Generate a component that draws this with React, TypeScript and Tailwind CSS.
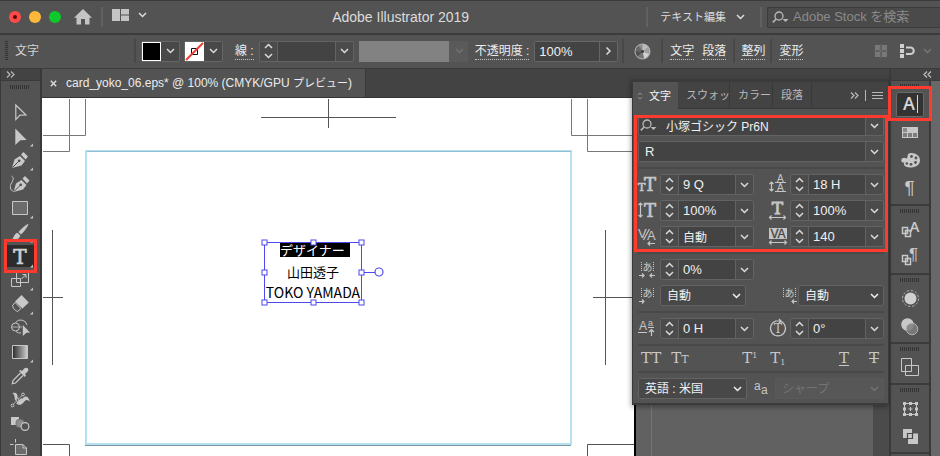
import { ReactNode, useState } from "react";

const SERIF = "DejaVu Serif";
const SANS = "Liberation Sans";
const JP = "Noto Sans CJK JP";

function Chevron({ className = "" }: { className?: string }) {
  return (
    <svg width="9" height="6" viewBox="0 0 9 6" className={className} aria-hidden="true">
      <path d="M1 1 L4.5 4.5 L8 1" fill="none" stroke="currentColor" strokeWidth="1.5" />
    </svg>
  );
}

function DoubleChevron({ left = false }: { left?: boolean }) {
  return (
    <svg width="9" height="7" viewBox="0 0 9 7" aria-hidden="true">
      <path
        d={left ? "M4 .5 L1 3.5 L4 6.5 M8 .5 L5 3.5 L8 6.5" : "M1 .5 L4 3.5 L1 6.5 M5 .5 L8 3.5 L5 6.5"}
        fill="none"
        stroke="currentColor"
        strokeWidth="1.2"
      />
    </svg>
  );
}

function SearchMark() {
  return (
    <svg width="17" height="13" viewBox="0 0 17 13" className="shrink-0" aria-hidden="true">
      <circle cx="7" cy="5" r="4" fill="none" stroke="#b8b8b8" strokeWidth="1.3" />
      <path d="M4.2 8 L.8 11.4" stroke="#b8b8b8" strokeWidth="1.6" />
      <path d="M10.5 8 H16.5 L13.5 11 Z" fill="#b8b8b8" />
    </svg>
  );
}

function Grip({ vertical = false }: { vertical?: boolean }) {
  if (vertical) {
    return (
      <svg width="3" height="20" viewBox="0 0 3 20" aria-hidden="true">
        <path d="M1.5 0 V20" stroke="#333" strokeWidth="3" strokeDasharray="1 1" />
      </svg>
    );
  }
  return (
    <svg width="20" height="4" viewBox="0 0 20 4" aria-hidden="true">
      <path d="M0 2 H20" stroke="#333" strokeWidth="4" strokeDasharray="1 1" />
    </svg>
  );
}

function Separator() {
  return <span className="w-[2px] h-6 bg-[#484848] shrink-0" />;
}

function Stepper({ name }: { name: string }) {
  return (
    <span className="flex flex-col w-[18px] h-full shrink-0 border-r border-[#636363] text-[#dadada]">
      <button aria-label={name + "を上げる"} className="flex-1 flex items-center justify-center">
        <Chevron className="rotate-180" />
      </button>
      <button aria-label={name + "を下げる"} className="flex-1 flex items-center justify-center">
        <Chevron />
      </button>
    </span>
  );
}

type ComboProps = {
  name: string;
  initial: string;
  stepper?: boolean;
  icon?: ReactNode;
  className?: string;
  text?: string;
};

function Combo({ name, initial, stepper = true, icon, className = "", text = "text-[13px] pl-1" }: ComboProps) {
  const [value, setValue] = useState(initial);

  return (
    <span className={`flex h-[21px] min-w-0 rounded-[2px] border border-[#636363] bg-[#4b4b4b] ${className}`}>
      {stepper && <Stepper name={name} />}
      <span className="flex flex-1 min-w-0 items-center bg-[#434343]">
        {icon}
        <input
          aria-label={name}
          value={value}
          onChange={(e) => setValue(e.target.value)}
          className={`w-full min-w-0 h-full bg-transparent leading-[19px] text-[#f0f0f0] outline-none ${text}`}
        />
      </span>
      <button
        aria-label={name + "の候補"}
        className="w-[18px] shrink-0 flex items-center justify-center border-l border-[#636363] text-[#dadada]"
      >
        <Chevron />
      </button>
    </span>
  );
}

type PickProps = { name: string; value: string; disabled?: boolean; className?: string };

function Pick({ name, value, disabled, className = "" }: PickProps) {
  return (
    <span className={`relative h-[21px] ${disabled ? "text-[#747474]" : "text-[#f0f0f0]"} ${className}`}>
      <select
        aria-label={name}
        disabled={disabled}
        className={`block w-full h-full appearance-none rounded-[2px] border pl-[6px] pt-px text-[12px] leading-[18px] opacity-100 outline-none ${
          disabled ? "border-[#595959] bg-[#575757]" : "border-[#636363] bg-[#484848]"
        }`}
      >
        <option>{value}</option>
      </select>
      <Chevron className="absolute right-[5px] top-2 pointer-events-none" />
    </span>
  );
}

function TitleBar() {
  return (
    <header className="flex items-center h-[35px] shrink-0 border-t border-b-2 border-[#3b3b3b] text-[#dcdcdc]">
      <div className="flex gap-2 pl-[9px]">
        <button aria-label="閉じる" className="size-3 rounded-full bg-[#fc4b48] flex items-center justify-center">
          <span className="size-1 rounded-full bg-[#5a0505]" />
        </button>
        <button aria-label="しまう" className="size-3 rounded-full bg-[#fdb83b]" />
        <button aria-label="拡大" className="size-3 rounded-full bg-[#0fc92c]" />
      </div>
      <button aria-label="ホーム" className="ml-[13px]">
        <svg width="18" height="16" viewBox="0 0 18 16">
          <path d="M9 0 L18 8.8 H15.5 V15.5 H11 V10 H7 V15.5 H2.5 V8.8 H0 Z" fill="#c4c4c4" />
        </svg>
      </button>
      <span className="w-[2px] h-5 mx-[9px] bg-[#616161]" />
      <button aria-label="ドキュメントのレイアウト" className="flex items-center gap-[9px] pb-1">
        <svg width="17" height="12" viewBox="0 0 17 12">
          <path d="M0 0 H8 V12 H0 Z M9 0 H17 V5.5 H9 Z M9 6.5 H17 V12 H9 Z" fill="#c4c4c4" />
        </svg>
        <Chevron />
      </button>
      <h1 className="flex-1 pl-2 text-center text-[14px]">Adobe Illustrator 2019</h1>
      <span className="w-[2px] h-5 mr-3 bg-[#616161]" />
      <button className="flex items-center gap-[10px] text-[11px]">
        テキスト編集
        <Chevron />
      </button>
      <span className="w-[2px] h-5 ml-[15px] mr-[5px] bg-[#616161]" />
      <label className="flex items-center gap-1 w-[173px] h-[21px] pl-1 border border-r-0 border-[#3b3b3b] bg-[#4a4a4a] rounded-l-[2px]">
        <SearchMark />
        <input
          aria-label="Adobe Stock を検索"
          placeholder="Adobe Stock を検索"
          className="w-full min-w-0 bg-transparent text-[13px] leading-4 placeholder:text-[#8a8a8a] outline-none"
        />
      </label>
    </header>
  );
}

function PanelLink({ children }: { children: ReactNode }) {
  return (
    <button className="pt-px text-[12px] leading-4 text-[#ececec] border-b border-dotted border-[#c4c4c4]">
      {children}
    </button>
  );
}

function ControlBar() {
  return (
    <div className="flex items-center h-[34px] shrink-0 border-b border-[#3b3b3b] pb-px">
      <span className="pl-[5px] pr-[7px]">
        <Grip vertical />
      </span>
      <span className="w-[119px] text-[12px] text-[#d2d2d2]">文字</span>
      <Separator />
      <div className="flex items-center gap-1 pl-[5px] pr-3 text-[#dadada]">
        <button aria-label="塗り" className="flex h-[21px] border border-[#666] rounded-[2px]">
          <span className="w-[19px] h-[19px] bg-black border border-white" />
          <span className="w-[18px] h-full flex items-center justify-center bg-[#484848]">
            <Chevron />
          </span>
        </button>
        <button aria-label="線の色" className="flex h-[21px] border border-[#666] rounded-[2px]">
          <svg width="19" height="19" viewBox="0 0 19 19">
            <path d="M0 0 H19 V19 H0 Z" fill="#fff" />
            <path d="M6.5 6.5 H12.5 V12.5 H6.5 Z" fill="none" stroke="#111" />
            <path d="M1 18 L18 1" stroke="#ee3b33" strokeWidth="2" />
          </svg>
          <span className="w-[18px] h-full flex items-center justify-center bg-[#484848]">
            <Chevron />
          </span>
        </button>
      </div>
      <PanelLink>線 :</PanelLink>
      <Combo name="線幅" initial="" className="w-[95px] ml-[5px]" />
      <button
        aria-label="線の種類"
        disabled
        className="flex ml-[5px] w-[109px] h-[21px] items-center justify-end pr-1 bg-[linear-gradient(to_right,#828282_90px,#5a5a5a_90px)] text-[#727272]"
      >
        <Chevron />
      </button>
      <span className="w-[7px]" />
      <PanelLink>不透明度 :</PanelLink>
      <span className="flex ml-[5px] w-[84px] h-[21px] border border-[#666] rounded-[2px]">
        <input
          aria-label="不透明度"
          defaultValue="100%"
          className="w-full min-w-0 pl-1 bg-[#434343] text-[13px] leading-[19px] text-[#f0f0f0] outline-none"
        />
        <button
          aria-label="不透明度を調整"
          className="w-[18px] shrink-0 flex items-center justify-center border-l border-[#666] bg-[#484848] text-[#dadada]"
        >
          <Chevron className="-rotate-90" />
        </button>
      </span>
      <span className="w-1" />
      <Separator />
      <button aria-label="オブジェクトを再配色" className="mx-[10px]">
        <svg width="17" height="17" viewBox="0 0 17 17">
          <circle cx="8.5" cy="8.5" r="7.5" fill="#8b8b8b" />
          <path d="M8.5 8.5 L8.5 1 A7.5 7.5 0 0 1 14.600 4 Z" fill="#bdbdbd" />
          <path d="M8.5 8.5 L14.600 4 A7.5 7.5 0 0 1 15.500 11 Z" fill="#a0a0a0" />
          <path d="M8.5 8.5 L15.500 11 A7.5 7.5 0 0 1 10 15.900 Z" fill="#cfcfcf" />
          <path d="M8.5 8.5 L10 15.900 A7.5 7.5 0 0 1 3.300 14 Z" fill="#757575" />
          <path d="M8.5 8.5 L3.300 14 A7.5 7.5 0 0 1 1 8 Z" fill="#505050" />
          <path d="M8.5 8.5 L1 8 A7.5 7.5 0 0 1 4.500 2.200 Z" fill="#686868" />
          <circle cx="8.5" cy="8.5" r="7.500" fill="none" stroke="#b5b5b5" />
          <circle cx="8.5" cy="8.5" r="1.5" fill="#3c3c3c" />
        </svg>
      </button>
      <Separator />
      <div className="flex gap-2 px-[7px]">
        <PanelLink>文字</PanelLink>
        <PanelLink>段落</PanelLink>
      </div>
      <Separator />
      <span className="w-[6px]" />
      <PanelLink>整列</PanelLink>
      <span className="w-[5px]" />
      <Separator />
      <span className="w-[7px]" />
      <PanelLink>変形</PanelLink>
      <div className="flex items-center ml-auto pr-2 gap-2">
        <button aria-label="ピクセルに整合" className="mr-1">
          <svg width="14" height="14" viewBox="0 0 14 14">
            <path d="M1 1 H6 V6 H1 Z M8 1 H13 V6 H8 Z M1 8 H6 V13 H1 Z M8 8 H13 V13 H8 Z" fill="#787878" />
            <path d="M7 0 V14 M0 7 H14" stroke="#787878" strokeWidth=".8" />
          </svg>
        </button>
        <button aria-label="スナップ" className="flex items-center gap-2 text-[#777]">
          <svg width="15" height="14" viewBox="0 0 15 14">
            <path d="M0 0 H4 V4 H0 Z M0 5 H4 V9 H0 Z M0 10 H4 V14 H0 Z" fill="#d0d0d0" />
            <path d="M6 3.5 H10.5 A3.2 3.2 0 0 1 10.5 10 H6" fill="none" stroke="#d0d0d0" strokeWidth="2" />
          </svg>
          <Chevron />
        </button>
      </div>
    </div>
  );
}

const nib = (
  <>
    <path d="M4 20 L6.5 11.5 L12 8 L17 13 L13.5 17.5 Z M13 6.5 L15.5 4 L20 8.5 L17.5 11.5 Z" fill="#c8c8c8" />
    <path d="M4.5 19.5 L11 13" stroke="#4c4c4c" />
    <circle cx="11.2" cy="12.8" r="1.3" fill="#4c4c4c" />
  </>
);

const tools: { name: string; corner?: boolean; art: ReactNode }[] = [
  {
    name: "選択",
    art: <path d="M7.8 5 L18 15 L12 15.2 L7.8 19.5 Z" fill="none" stroke="#c8c8c8" strokeWidth="1.2" />,
  },
  { name: "ダイレクト選択", corner: true, art: <path d="M7.3 4.5 L18.7 16 L12.3 16.2 L7.3 21 Z" fill="#c8c8c8" /> },
  { name: "ペン", corner: true, art: nib },
  {
    name: "曲線",
    art: (
      <>
        <g transform="translate(1.5 0)">{nib}</g>
        <path d="M3.5 4 C6.5 6 5 8.5 3.5 11 C1.5 14 2 18.5 5.5 19.3" fill="none" stroke="#c8c8c8" />
      </>
    ),
  },
  {
    name: "長方形",
    corner: true,
    art: <path d="M4.5 5.5 H19.5 V18.5 H4.5 Z" fill="#6c6c6c" stroke="#c8c8c8" />,
  },
  {
    name: "ブラシ",
    corner: true,
    art: (
      <path
        d="M20.5 3.8 C18 4.5 12.5 9.5 10.5 12 L13 14.5 C15.5 12.5 19.8 7 20.5 3.8 Z M9.5 12.8 L12.2 15.5 C12 18.5 8 20.5 3.5 20 C6 18.5 5.5 14 9.5 12.8 Z"
        fill="#c8c8c8"
      />
    ),
  },
  {
    name: "文字ツール",
    corner: true,
    art: (
      <text
        x="12"
        y="19"
        textAnchor="middle"
        fontFamily={SERIF}
        fontSize="20"
        fill="#d0d0d0"
        stroke="#d0d0d0"
        strokeWidth=".7"
      >
        T
      </text>
    ),
  },
  {
    name: "拡大・縮小",
    corner: true,
    art: (
      <>
        <path d="M3.5 10.5 H12.5 V18.5 H3.5 Z M8.5 4.5 H20.5 V14.5 H8.5 Z" fill="none" stroke="#c8c8c8" />
        <path d="M13.5 11 L17.5 7 M14.5 6.5 H18 V10" fill="none" stroke="#c8c8c8" />
      </>
    ),
  },
  {
    name: "消しゴム",
    corner: true,
    art: (
      <>
        <path d="M13.5 3 L20.8 10.5 L14.5 16.5 L7 9.5 Z" fill="#c8c8c8" />
        <path d="M7 10.5 L4.5 13.5 C5 16.5 7 18.5 9.5 19.5 L13 16.5 Z" fill="none" stroke="#c8c8c8" />
      </>
    ),
  },
  {
    name: "シェイプ形成",
    art: (
      <>
        <circle cx="7.5" cy="11" r="4" fill="none" stroke="#c8c8c8" />
        <path d="M7.5 6.5 A6.5 6.5 0 0 1 19 9 M8 15.5 A6 6 0 0 0 13 17" fill="none" stroke="#c8c8c8" />
        <path d="M4.5 11 H14" stroke="#c8c8c8" strokeWidth="1.5" strokeDasharray="1 1" />
        <path d="M14.8 9 L22 16.5 L18.5 16.8 L14.8 20 Z" fill="#c8c8c8" />
      </>
    ),
  },
  {
    name: "グラデーション",
    corner: true,
    art: (
      <>
        <defs>
          <linearGradient id="ramp">
            <stop offset="0" stopColor="#2a2a2a" />
            <stop offset="1" stopColor="#d0d0d0" />
          </linearGradient>
        </defs>
        <path d="M4.5 5.5 H19.5 V18.5 H4.5 Z" fill="url(#ramp)" stroke="#c8c8c8" />
      </>
    ),
  },
  {
    name: "スポイト",
    art: (
      <>
        <path d="M12.5 9 L5 16.5 L4.3 19.7 L7.5 19 L15 11.5" fill="none" stroke="#c8c8c8" strokeWidth="1.2" />
        <path
          d="M11 7 L12.5 6 L14 7 L16.5 4.3 Q18.5 3 20 4.5 Q21 6 19.7 7.5 L17 10 L18 11.5 L16.8 13 Z"
          fill="#c8c8c8"
        />
      </>
    ),
  },
  {
    name: "パペットワープ",
    art: (
      <>
        <path
          d="M4.5 5 C8 4 10 6 9.500 9.5 L12.500 8 L14 11 C17 6.5 21 8 21.8 14 C19 10.5 17.500 12 15.5 14.5 C13 18 9.5 17 8 15 C6 13 8 8 4.500 5 Z"
          fill="#c8c8c8"
        />
        <path d="M5 16.5 L15 6.5" stroke="#535353" strokeWidth="2.500" />
        <path d="M5 16.5 L15 6.5" stroke="#c8c8c8" strokeWidth=".8" />
        <circle cx="4.5" cy="17.5" r="1.4" fill="#535353" stroke="#c8c8c8" />
        <circle cx="9.5" cy="12" r="1.4" fill="#535353" stroke="#c8c8c8" />
        <circle cx="15" cy="6.5" r="1.4" fill="#535353" stroke="#c8c8c8" />
      </>
    ),
  },
  {
    name: "ブレンド",
    art: (
      <>
        <path d="M3 5 H11 V13 H3 Z" fill="#c8c8c8" />
        <rect x="8" y="7.5" width="8" height="8" rx="3" fill="#8d8d8d" stroke="#6b6b6b" strokeWidth=".8" />
        <circle cx="17" cy="14.5" r="3.9" fill="#535353" stroke="#c8c8c8" strokeWidth="1.2" />
      </>
    ),
  },
  {
    name: "アートボード",
    art: (
      <path
        d="M7.5 3 V6.5 M2 8.5 H5.5 M7.5 8.5 H15 L18.5 12 V18.5 H7.5 Z M15 8.5 V12 H18.5"
        fill="#6c6c6c"
        stroke="#c8c8c8"
      />
    ),
  },
];

function Toolbar() {
  return (
    <nav className="flex flex-col w-[42px] shrink-0 border-l border-r-2 border-[#393939] bg-[#535353]">
      <div className="flex items-center h-3 shrink-0 pl-[5px] bg-[#434343] border-b border-[#3b3b3b] text-[#b8b8b8]">
        <DoubleChevron />
      </div>
      <div className="flex justify-center h-[19px] shrink-0 pt-1 pr-px">
        <Grip />
      </div>
      {tools.map((tool) => {
        const active = tool.name === "文字ツール";
        return (
          <button key={tool.name} aria-label={tool.name} className="relative h-6 shrink-0 flex justify-center">
            <span className={active ? "w-7 h-[22px] self-center bg-[#2c2c2c]" : "w-7 h-6"}>
              <svg width="28" height="24" viewBox="-1 0 28 24" className="overflow-visible">
                {tool.art}
                {tool.corner && <path d="M25 19.5 V22.5 H22 Z" fill="#c8c8c8" />}
              </svg>
            </span>
            {active && <span className="absolute inset-x-[3px] -inset-y-[5px] z-10 border-[3px] border-[#ff3b30]" />}
          </button>
        );
      })}
    </nav>
  );
}

function Artboard() {
  const handles = [
    [0, 0], [49, 0], [97, 0], [0, 30], [97, 30], [0, 60], [49, 60], [97, 60],
  ];

  return (
    <div className="relative w-[594px] shrink-0 h-full bg-white border-r-2 border-black overflow-hidden">
      <svg width="594" height="358" viewBox="0 0 594 358" fill="none" className="block">
        <path d="M27.5 1 V53.5 H1 M43.5 1 V37.5 H1 M529.5 1 V37.5 H594 M545.5 1 V53.5 H594" stroke="#777" />
        <path
          d="M286.5 1 V30 M219 19.5 H354 M10.5 132 V267 M1 199.5 H21 M563.5 132 V267 M551 199.5 H594"
          stroke="#555"
        />
        <path d="M1 346.5 H27.5 V358 M594 346.5 H545.5 V358" stroke="#555" />
        <path d="M44 53 H529 V346 H44 Z" stroke="#b4e0ef" strokeWidth="2" />
        <path d="M45 53.5 H529" stroke="#94bfd2" />
        <path d="M43 347.5 H529" stroke="#7f95a1" />
      </svg>
      <div className="absolute left-[222px] top-[145px] w-[98px] flex flex-col items-center text-black font-['Noto_Sans_CJK_JP',sans-serif]">
        <span className="self-start ml-4 w-[70px] h-[14px] bg-black text-white text-[13px] leading-[13px]">
          デザイナー
        </span>
        <span className="mt-[7px] text-[13px] leading-4">山田透子</span>
        <span className="mt-1 text-[14px] leading-4 whitespace-nowrap">TOKO YAMADA</span>
      </div>
      <svg width="124" height="70" viewBox="-4 -4 124 70" fill="none" className="absolute left-[218px] top-[140px]">
        <path d="M.5 .5 H97.5 V60.5 H.5 Z M97.5 30.5 H111" stroke="#4d49ee" />
        <circle cx="115" cy="30" r="4" stroke="#4d49ee" strokeWidth="1.2" />
        {handles.map(([x, y]) => (
          <rect key={x + "-" + y} x={x - 2} y={y - 2} width="5" height="5" fill="#fff" stroke="#4d49ee" />
        ))}
      </svg>
    </div>
  );
}

function Glyph({ label, w = 22, children }: { label: string; w?: number; children: ReactNode }) {
  return (
    <svg
      width={w}
      height="21"
      viewBox={`0 0 ${w} 21`}
      role="img"
      aria-label={label}
      fill="none"
      stroke="none"
      className="shrink-0 overflow-visible"
    >
      {children}
    </svg>
  );
}

const line = { stroke: "#c6c6c6", strokeWidth: 1.2 };
const ink = "#c6c6c6";

function Field({ label, value, icon, text }: { label: string; value: string; icon: ReactNode; text?: string }) {
  return (
    <div className="flex w-[116px]">
      <Glyph label={label}>{icon}</Glyph>
      <Combo name={label} initial={value} text={text} className="flex-1" />
    </div>
  );
}

function Rule() {
  return <hr className="h-[2px] border-0 bg-[#494949]" />;
}

function AkiIcon({ arrows }: { arrows: "both" | "right" | "left" }) {
  return (
    <>
      <path d="M3.5 3 V13 M15.5 3 V13" stroke={ink} strokeDasharray="1 1" />
      <text x="9.5" y="12" textAnchor="middle" fontFamily={JP} fontSize="10" fill={ink}>
        あ
      </text>
      {arrows !== "left" && <path d="M1 16.5 H6 M4 14.5 L6 16.5 L4 18.5" {...line} />}
      {arrows !== "right" && <path d="M17 16.5 H12 M14 14.5 L12 16.5 L14 18.5" {...line} />}
    </>
  );
}

function CharacterPanel() {
  const tabs = [
    { name: "スウォッ", size: "w-[52px] pl-2" },
    { name: "カラー", size: "w-[43px] pl-2" },
    { name: "段落", size: "w-[39px] pl-2" },
  ];

  return (
    <section className="absolute right-0 top-[10px] w-[257px] z-10 border border-t-[3px] border-b-2 border-[#3a3a3a] bg-[#535353] shadow-[-1px_2px_5px_rgba(0,0,0,0.35)]">
      <div className="flex h-[27px] bg-[#434343] text-[11px] text-[#b9b9b9]">
        <button className="flex items-center gap-[6px] w-[45px] pl-1 pt-px bg-[#535353] text-[#f4f4f4] whitespace-nowrap">
          <svg width="6" height="8" viewBox="0 0 6 8" fill="none" stroke="#999" strokeWidth=".9" className="shrink-0">
            <path d="M1 3 L3 .8 L5 3 M1 5 L3 7.2 L5 5" />
          </svg>
          文字
        </button>
        {tabs.map((tab) => (
          <button
            key={tab.name}
            className={`whitespace-nowrap text-left pt-px border-r border-b border-[#393939] ${tab.size}`}
          >
            {tab.name}
          </button>
        ))}
        <div className="flex flex-1 items-center justify-end gap-[6px] pr-[5px] border-b border-[#393939]">
          <button aria-label="展開">
            <DoubleChevron />
          </button>
          <span className="w-px h-[11px] bg-[#b9b9b9]" />
          <button aria-label="パネルメニュー">
            <svg width="11" height="9" viewBox="0 0 11 9">
              <path d="M0 1.5 H11 M0 4.5 H11 M0 7.5 H11" stroke="#b9b9b9" />
            </svg>
          </button>
        </div>
      </div>

      <div className="flex flex-col gap-[5px] pl-[5px] pr-1 pt-[6px] pb-1">
        <div className="relative flex flex-col gap-[5px]">
          <Combo
            name="フォント"
            initial="小塚ゴシック Pr6N"
            stepper={false}
            text="text-[12px] pl-1"
            icon={
              <span className="pl-px pr-[5px]">
                <SearchMark />
              </span>
            }
          />
          <Combo name="スタイル" initial="R" stepper={false} text="text-[13px] pl-[6px]" />
          <Rule />
          <div className="flex justify-between">
            <Field
              label="フォントサイズ"
              value="9 Q"
              icon={
                <g fontFamily={SERIF} fill={ink} stroke={ink} strokeWidth=".7">
                  <text x="0" y="17" fontSize="11">T</text>
                  <text x="6" y="17" fontSize="18">T</text>
                </g>
              }
            />
            <Field
              label="行送り"
              value="18 H"
              icon={
                <>
                  <g fontFamily={SANS} fontSize="10" fill={ink}>
                    <text x="9" y="8">A</text>
                    <text x="9" y="17">A</text>
                  </g>
                  <path
                    d="M7 8.5 H18 M7 17.5 H18 M3.5 8 V17 M1.5 10 L3.5 8 L5.5 10 M1.5 15 L3.5 17 L5.5 15"
                    {...line}
                  />
                </>
              }
            />
          </div>
          <div className="flex justify-between">
            <Field
              label="垂直比率"
              value="100%"
              icon={
                <>
                  <text x="6" y="17" fontFamily={SERIF} fontSize="18" fill={ink} stroke={ink} strokeWidth=".7">T</text>
                  <path d="M2.5 3 V17 M.5 5 L2.5 3 L4.5 5 M.5 15 L2.5 17 L4.5 15" {...line} />
                </>
              }
            />
            <Field
              label="水平比率"
              value="100%"
              icon={
                <>
                  <text
                    x="9.5"
                    y="14"
                    textAnchor="middle"
                    fontFamily={SERIF}
                    fontSize="17"
                    fill={ink}
                    stroke={ink}
                    strokeWidth=".8"
                  >
                    T
                  </text>
                  <path d="M1.5 17.5 H17.5 M3.5 15.5 L1.5 17.5 L3.5 19.5 M15.5 15.5 L17.5 17.5 L15.5 19.5" {...line} />
                </>
              }
            />
          </div>
          <div className="flex justify-between">
            <Field
              label="カーニング"
              value="自動"
              text="text-[12px] pl-1"
              icon={
                <>
                  <g fontFamily={SANS} fontSize="13" fill={ink}>
                    <text x="0" y="12">V</text>
                    <text x="9" y="14">A</text>
                  </g>
                  <path d="M5.5 14 L11.5 3 M17 17.5 H10 M12 15.5 L10 17.5 L12 19.5" {...line} />
                </>
              }
            />
            <Field
              label="トラッキング"
              value="140"
              icon={
                <>
                  <path d="M1 2 H19 V13 H1 Z" fill={ink} />
                  <text
                    x="10"
                    y="12"
                    textAnchor="middle"
                    fontFamily={SANS}
                    fontSize="12"
                    fill="#444"
                    stroke="#444"
                    strokeWidth=".3"
                  >
                    VA
                  </text>
                  <path
                    d="M1.5 16.5 H18.5 M3.5 14.5 L1.5 16.5 L3.5 18.5 M16.5 14.5 L18.5 16.5 L16.5 18.5"
                    {...line}
                  />
                </>
              }
            />
          </div>
          <span className="absolute -inset-x-1 top-0 -bottom-[5px] border-[3px] border-[#ff3b30] pointer-events-none" />
        </div>
        <Rule />
        <Field label="文字ツメ" value="0%" icon={<AkiIcon arrows="both" />} />
        <div className="flex">
          <Glyph label="左アキ">
            <AkiIcon arrows="right" />
          </Glyph>
          <Pick name="文字前のアキ" value="自動" className="w-[86px]" />
          <span className="flex-1" />
          <Glyph label="右アキ" w={18}>
            <AkiIcon arrows="left" />
          </Glyph>
          <Pick name="文字後のアキ" value="自動" className="w-[86px]" />
        </div>
        <Rule />
        <div className="flex justify-between">
          <Field
            label="ベースラインシフト"
            value="0 H"
            icon={
              <>
                <g fontFamily={SANS} fill={ink}>
                  <text x="1" y="12" fontSize="12">A</text>
                  <text x="10" y="8" fontSize="9">a</text>
                </g>
                <path d="M0 14.5 H9 M10 9.5 H16 M13.5 18 V11.5 M11 14 L13.5 11.5 L16 14" {...line} />
              </>
            }
          />
          <Field
            label="文字回転"
            value="0°"
            icon={
              <>
                <path d="M7.5 3.3 A7.5 7.5 0 1 0 12.5 3.3 M7 3 H13 M11 1 L13 3 L11 5" {...line} />
                <text x="10" y="15" textAnchor="middle" fontFamily={SERIF} fontSize="12" fill={ink}>T</text>
              </>
            }
          />
        </div>
        <Rule />
        <div className="flex h-[15px] items-center pl-[3px] pr-[5px] text-[15px] leading-[15px] text-[#c8c8c8] font-['DejaVu_Serif',serif]">
          <button aria-label="オールキャップス">TT</button>
          <button aria-label="スモールキャップス" className="ml-[10px]">
            T<span className="text-[11px]">T</span>
          </button>
          <span className="flex-1" />
          <button aria-label="上付き文字" className="flex">
            T<span className="text-[8px] leading-[9px]">1</span>
          </button>
          <button aria-label="下付き文字" className="flex ml-[13px]">
            T<span className="self-end text-[8px] leading-[6px]">1</span>
          </button>
          <span className="flex-1" />
          <button aria-label="下線" className="underline underline-offset-2">T</button>
          <button aria-label="打ち消し線" className="ml-5 line-through">T</button>
        </div>
        <Rule />
        <div className="flex justify-between">
          <Pick name="言語" value="英語 : 米国" className="w-[109px]" />
          <Glyph label="アンチエイリアス" w={16}>
            <g fontFamily={SANS} fontSize="12" fill={ink}>
              <text x="1" y="12">a</text>
              <text x="8" y="16">a</text>
            </g>
          </Glyph>
          <Pick name="アンチエイリアスの種類" value="シャープ" disabled className="w-[109px]" />
        </div>
      </div>
    </section>
  );
}

const stacked = (
  <path
    d="M6.5 11.5 H11.5 V17.5 H6.5 Z M9.5 14.5 H14.5 V20.5 H9.5 Z"
    fill="none"
    stroke="#c8c8c8"
    strokeWidth="1.5"
  />
);

const dockGroups: { name: string; art: ReactNode }[][] = [
  [
    {
      name: "文字パネル",
      art: (
        <>
          <rect x=".5" y="1.5" width="27" height="24" rx="2" fill="#333" stroke="#6a6a6a" />
          <text
            x="13"
            y="19"
            textAnchor="middle"
            fontFamily="Open Sans"
            fontSize="18"
            fontWeight="600"
            fill="#d8d8d8"
          >
            A
          </text>
          <path d="M21.5 4 V22" stroke="#d8d8d8" />
        </>
      ),
    },
    {
      name: "スウォッチパネル",
      art: (
        <>
          <path d="M6 8 H22 V19 H6 Z" fill="#c8c8c8" />
          <path d="M7 9 H11 V13 H7 Z" fill="#8b8b8b" />
          <path d="M7 14 H11 V18 H7 Z M12 14 H16 V18 H12 Z M17 14 H21 V18 H17 Z" fill="#7d7d7d" />
        </>
      ),
    },
    {
      name: "カラーパネル",
      art: (
        <>
          <path
            d="M13 6.5 C18 5 24 8 24 13.5 C24 18 19.5 20.5 14 20.5 C8 20.5 7 16.5 8.5 15.5 C5.5 16 4.5 13.5 6 11.5 C7 10.5 9 10.5 10.5 11.5 C12.5 10.5 10.5 8 13 6.5 Z"
            fill="#c8c8c8"
          />
          <g fill="#535353">
            <circle cx="15.5" cy="9.5" r="1.4" />
            <circle cx="20" cy="11" r="1.4" />
            <circle cx="19.5" cy="15.500" r="1.4" />
            <circle cx="15" cy="17.3" r="1.4" />
            <circle cx="10.8" cy="16.5" r="1.300" />
          </g>
        </>
      ),
    },
    {
      name: "段落パネル",
      art: (
        <text x="13.5" y="19" textAnchor="middle" fontFamily={SANS} fontSize="19" fill="#c8c8c8">¶</text>
      ),
    },
  ],
  [
    {
      name: "文字スタイル",
      art: (
        <>
          {stacked}
          <text
            x="18.5"
            y="16"
            textAnchor="middle"
            fontFamily="Open Sans"
            fontSize="15"
            fontWeight="600"
            fill="#c8c8c8"
          >
            A
          </text>
        </>
      ),
    },
    {
      name: "段落スタイル",
      art: (
        <>
          {stacked}
          <text x="17.5" y="16" textAnchor="middle" fontFamily={SANS} fontSize="17" fill="#c8c8c8">¶</text>
        </>
      ),
    },
  ],
  [
    {
      name: "アピアランス",
      art: (
        <>
          <circle cx="14.5" cy="13.5" r="6" fill="#d0d0d0" />
          <circle cx="14.5" cy="13.5" r="8" fill="none" stroke="#b0b0b0" strokeDasharray="2.5 1.7" />
        </>
      ),
    },
    {
      name: "透明",
      art: (
        <>
          <circle cx="11.5" cy="11.5" r="6.3" fill="#c8c8c8" />
          <circle cx="16" cy="16" r="5.8" fill="#7f7f7f" fillOpacity=".85" stroke="#b0b0b0" />
        </>
      ),
    },
  ],
  [
    {
      name: "レイヤー",
      art: (
        <path
          d="M5.5 4.5 H15.5 V17.5 H5.5 Z M9.5 11.5 H22.5 V21.5 H9.5 Z"
          fill="#535353"
          stroke="#c8c8c8"
        />
      ),
    },
  ],
  [
    {
      name: "変形パネル",
      art: (
        <>
          <path d="M8.5 8.5 H20.5 V19.5 H8.5 Z M12.5 14 H16.5 M14.5 12 V16" fill="none" stroke="#c8c8c8" />
          <path
            d="M7 7 H10 V10 H7 Z M13 7 H16 V10 H13 Z M19 7 H22 V10 H19 Z M7 18 H10 V21 H7 Z M13 18 H16 V21 H13 Z M19 18 H22 V21 H19 Z M7 12.5 H10 V15.5 H7 Z M19 12.5 H22 V15.5 H19 Z"
            fill="#c8c8c8"
          />
        </>
      ),
    },
    {
      name: "パスファインダー",
      art: (
        <>
          <path d="M7 6 H16 V10.5 H22 V21 H12 V15 H7 Z" fill="#c8c8c8" />
          <path d="M11.5 10.5 H16.5 V15.5 H11.5 Z" fill="#c8c8c8" stroke="#484848" strokeWidth="1.2" />
        </>
      ),
    },
  ],
];

function Dock() {
  return (
    <aside className="flex flex-col w-[51px] shrink-0 border-l-2 border-[#3a3a3a] bg-[#686868]">
      <div className="flex items-center justify-end h-3 shrink-0 pr-2 bg-[#434343] border-b border-[#3b3b3b] text-[#c0c0c0]">
        <DoubleChevron left />
      </div>
      <div className="flex flex-col flex-1 min-h-0 w-10 border-r-2 border-[#3a3a3a] bg-[#535353]">
        {dockGroups.map((group, i) => (
          <div key={i} className="flex flex-col shrink-0 pb-px border-b-2 border-[#3b3b3b]">
            <div className="flex justify-center h-[10px] pt-[3px]">
              <Grip />
            </div>
            {group.map((item) => (
              <button key={item.name} aria-label={item.name} className="relative flex justify-center h-7">
                <svg width="28" height="28" viewBox="0 0 28 28" className="overflow-visible">
                  {item.art}
                </svg>
                {item.name === "文字パネル" && (
                  <span className="absolute -inset-x-[3px] -top-[5px] -bottom-[2px] z-20 border-[3px] border-[#ff3b30]" />
                )}
              </button>
            ))}
          </div>
        ))}
      </div>
    </aside>
  );
}

export default function App() {
  return (
    <div className="flex flex-col h-screen overflow-hidden bg-[#535353] font-['Liberation_Sans','Noto_Sans_CJK_JP',sans-serif]">
      <TitleBar />
      <ControlBar />
      <div className="flex flex-1 min-h-0">
        <Toolbar />
        <main className="relative flex flex-col flex-1 min-w-0">
          <div className="flex h-[29px] shrink-0 bg-[#434343] border-b border-[#333]">
            <div className="flex items-center gap-[9px] px-2 pr-[13px] bg-[#535353] border-r border-[#383838] text-[12px] text-[#ececec]">
              <button aria-label="ファイルを閉じる">
                <svg width="7" height="7" viewBox="0 0 7 7">
                  <path d="M.8 .8 L6.2 6.2 M6.2 .8 L.8 6.2" stroke="#ddd" strokeWidth="1.4" />
                </svg>
              </button>
              <h2>
                card_yoko_06.eps* @ 100% (CMYK/GPU <span className="text-[11px]">プレビュー</span>)
              </h2>
            </div>
          </div>
          <div className="flex flex-1 min-h-0 overflow-hidden">
            <Artboard />
            <div className="flex-1 bg-[#616161] pl-[15px]">
              <div className="h-full border-l border-[#ff3b30]" />
            </div>
            <div className="w-4 bg-[#4b4b4b]" />
          </div>
          <CharacterPanel />
        </main>
        <Dock />
      </div>
    </div>
  );
}
